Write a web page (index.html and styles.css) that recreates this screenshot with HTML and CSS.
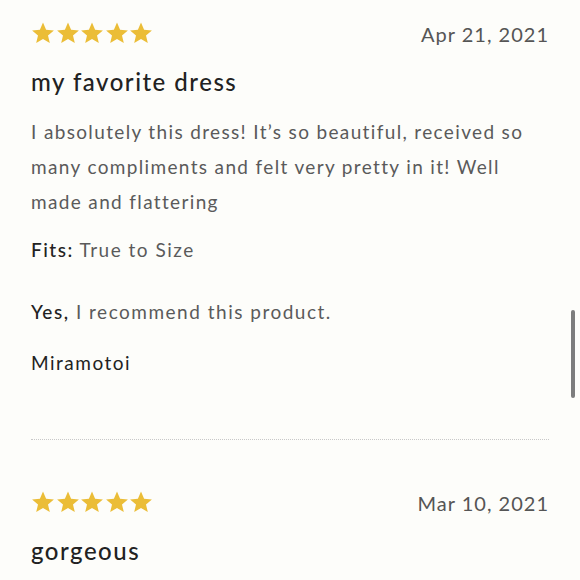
FILE: index.html
```html
<!DOCTYPE html>
<html lang="en">

<head>
    <meta charset="UTF-8">
    <meta name="viewport" content="width=device-width, initial-scale=1.0">
    <title>Reviews</title>
    <link rel="stylesheet" href="styles.css">
</head>

<body>
    <div class="reviews">
        <div class="review">
            <div class="review-head">
                <div class="stars">
                    <svg viewBox="0 0 24 24"><path d="M12 1.5l3.1 7.2 7.8.7-5.9 5.1 1.8 7.6L12 18.1l-6.8 4 1.8-7.6-5.9-5.1 7.8-.7z"/></svg>
                    <svg viewBox="0 0 24 24"><path d="M12 1.5l3.1 7.2 7.8.7-5.9 5.1 1.8 7.6L12 18.1l-6.8 4 1.8-7.6-5.9-5.1 7.8-.7z"/></svg>
                    <svg viewBox="0 0 24 24"><path d="M12 1.5l3.1 7.2 7.8.7-5.9 5.1 1.8 7.6L12 18.1l-6.8 4 1.8-7.6-5.9-5.1 7.8-.7z"/></svg>
                    <svg viewBox="0 0 24 24"><path d="M12 1.5l3.1 7.2 7.8.7-5.9 5.1 1.8 7.6L12 18.1l-6.8 4 1.8-7.6-5.9-5.1 7.8-.7z"/></svg>
                    <svg viewBox="0 0 24 24"><path d="M12 1.5l3.1 7.2 7.8.7-5.9 5.1 1.8 7.6L12 18.1l-6.8 4 1.8-7.6-5.9-5.1 7.8-.7z"/></svg>
                </div>
                <span class="review-date">Apr 21, 2021</span>
            </div>
            <h3 class="review-title">my favorite dress</h3>
            <p class="review-body">I absolutely this dress! It’s so beautiful, received so many compliments and felt very pretty in it! Well made and flattering</p>
            <p class="review-fit"><b>Fits:</b> True to Size</p>
            <p class="review-recommend"><b>Yes,</b> I recommend this product.</p>
            <p class="review-author">Miramotoi</p>
        </div>
        <div class="review">
            <div class="review-head">
                <div class="stars">
                    <svg viewBox="0 0 24 24"><path d="M12 1.5l3.1 7.2 7.8.7-5.9 5.1 1.8 7.6L12 18.1l-6.8 4 1.8-7.6-5.9-5.1 7.8-.7z"/></svg>
                    <svg viewBox="0 0 24 24"><path d="M12 1.5l3.1 7.2 7.8.7-5.9 5.1 1.8 7.6L12 18.1l-6.8 4 1.8-7.6-5.9-5.1 7.8-.7z"/></svg>
                    <svg viewBox="0 0 24 24"><path d="M12 1.5l3.1 7.2 7.8.7-5.9 5.1 1.8 7.6L12 18.1l-6.8 4 1.8-7.6-5.9-5.1 7.8-.7z"/></svg>
                    <svg viewBox="0 0 24 24"><path d="M12 1.5l3.1 7.2 7.8.7-5.9 5.1 1.8 7.6L12 18.1l-6.8 4 1.8-7.6-5.9-5.1 7.8-.7z"/></svg>
                    <svg viewBox="0 0 24 24"><path d="M12 1.5l3.1 7.2 7.8.7-5.9 5.1 1.8 7.6L12 18.1l-6.8 4 1.8-7.6-5.9-5.1 7.8-.7z"/></svg>
                </div>
                <span class="review-date">Mar 10, 2021</span>
            </div>
            <h3 class="review-title">gorgeous</h3>
        </div>
    </div>
    <div class="scrollbar"></div>
</body>

</html>
```

FILE: styles.css
```css
body {
    margin: 0;
    height: 580px;
    overflow: hidden;
    background-color: #fdfdfa;
    font-family: Lato, "Open Sans", sans-serif;
    color: #222;
}
.reviews {
    padding: 0 31px;
}
.review {
    padding-top: 21px;
}
.review + .review {
    border-top: 1px dotted #c8c8c8;
    padding-top: 50px;
}
.review-head {
    display: flex;
    justify-content: space-between;
    align-items: center;
    height: 24px;
}
.stars {
    display: flex;
    gap: 0.5px;
}
.stars svg {
    width: 24px;
    height: 24px;
    fill: #ebbd37;
}
.review-date {
    font-size: 20px;
    color: #555;
    letter-spacing: 1px;
    padding-top: 2px;
}
.review-title {
    margin: 23px 0 0;
    font-size: 24px;
    font-weight: 500;
    letter-spacing: 1.5px;
    line-height: 28px;
}
.review-body {
    margin: 18px 0 0;
    font-size: 19px;
    line-height: 35px;
    color: #5a5a5a;
    letter-spacing: 1.35px;
}
.review-fit, .review-recommend, .review-author {
    font-size: 19px;
    color: #5a5a5a;
    letter-spacing: 1.5px;
    line-height: 24px;
}
.review-fit {
    margin: 19px 0 0;
}
.review-recommend {
    margin: 38px 0 0;
}
.review-author {
    margin: 27px 0 64px;
    color: #222;
}
b {
    font-weight: 500;
    color: #222;
}
.scrollbar {
    position: absolute;
    top: 310px;
    left: 571px;
    width: 4px;
    height: 88px;
    border-radius: 2px;
    background-color: #7d7d7d;
}
```
